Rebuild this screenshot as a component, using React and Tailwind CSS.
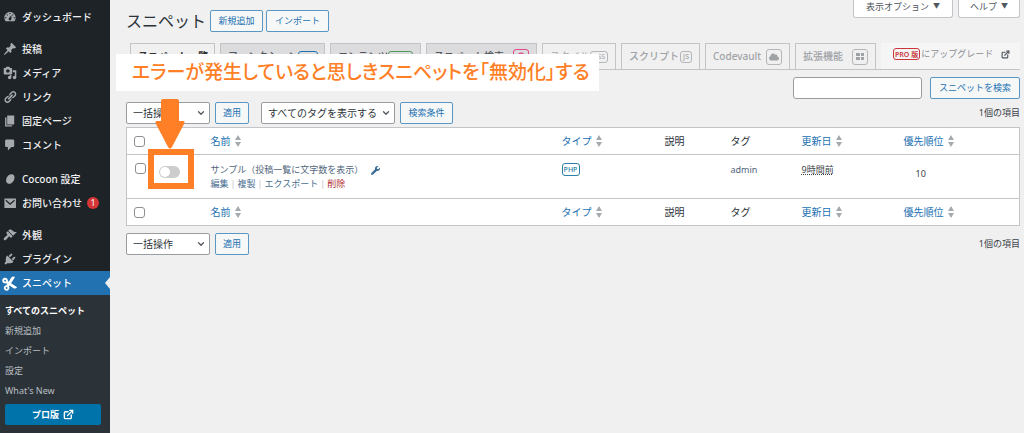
import React, { useState } from 'react';
import { ChevronDown, ExternalLink, Search } from 'lucide-react';
import { FaCut, FaWrench, FaCloud } from 'react-icons/fa';

const ICONS = {
  dashboard: 'M3.76 16h12.48c1.1-1.37 1.76-3.11 1.76-5 0-4.42-3.58-8-8-8s-8 3.58-8 8c0 1.89.66 3.63 1.76 5zM10 4c.55 0 1 .45 1 1s-.45 1-1 1-1-.45-1-1 .45-1 1-1zM6 6c.55 0 1 .45 1 1s-.45 1-1 1-1-.45-1-1 .45-1 1-1zm8 0c.55 0 1 .45 1 1s-.45 1-1 1-1-.45-1-1 .45-1 1-1zm-5.37 5.55L12 7v6c0 1.1-.9 2-2 2s-2-.9-2-2c0-.57.24-1.08.63-1.45zM4 10c.55 0 1 .45 1 1s-.45 1-1 1-1-.45-1-1 .45-1 1-1zm12 0c.55 0 1 .45 1 1s-.45 1-1 1-1-.45-1-1 .45-1 1-1z',
  post: 'M10.44 3.02l1.82-1.82 6.36 6.35-1.83 1.82c-1.05-.68-2.48-.57-3.41.36l-.75.75c-.92.93-1.04 2.35-.35 3.41l-1.83 1.82-2.41-2.41-2.8 2.79c-.42.42-3.38 2.71-3.8 2.29s1.86-3.39 2.28-3.81l2.79-2.79L4.1 9.36l1.83-1.82c1.05.69 2.48.57 3.4-.36l.75-.75c.93-.92 1.05-2.35.36-3.41z',
  media: 'M13 11V4c0-.55-.45-1-1-1h-1.67L9 1H5L3.67 3H2c-.55 0-1 .45-1 1v7c0 .55.45 1 1 1h10c.55 0 1-.45 1-1zM7 4.5c1.38 0 2.5 1.12 2.5 2.5S8.38 9.5 7 9.5 4.5 8.38 4.5 7 5.62 4.5 7 4.5zM14 6h5v10.5c0 1.38-1.12 2.5-2.5 2.5S14 17.88 14 16.5s1.12-2.5 2.5-2.5c.17 0 .34.02.5.05V9h-3V6zm-4 8.05V13h2v3.5c0 1.38-1.12 2.5-2.5 2.5S7 17.88 7 16.5 8.12 14 9.5 14c.17 0 .34.02.5.05z',
  link: 'M17.74 2.76c1.68 1.69 1.68 4.41 0 6.1l-1.53 1.52c-1.12 1.12-2.7 1.47-4.14 1.09l2.62-2.61.76-.77.76-.76c.84-.84.84-2.2 0-3.04-.84-.85-2.2-.85-3.04 0l-.77.76-3.38 3.38c-.37-1.44-.02-3.02 1.1-4.14l1.52-1.53c1.69-1.68 4.42-1.68 6.1 0zM8.59 13.43l5.34-5.34c.42-.42.42-1.1 0-1.52-.44-.43-1.13-.39-1.53 0l-5.33 5.34c-.42.42-.42 1.1 0 1.52.44.43 1.13.39 1.52 0zm-.76 2.29l4.14-4.15c.38 1.44.03 3.02-1.09 4.14l-1.52 1.53c-1.69 1.68-4.41 1.68-6.1 0-1.68-1.68-1.68-4.42 0-6.1l1.53-1.52c1.12-1.12 2.7-1.47 4.14-1.1l-4.14 4.15c-.85.84-.85 2.2 0 3.05.84.84 2.2.84 3.04 0z',
  page: 'M6 15V2h10v13H6zm-1 1h8v2H3V5h2v11z',
  comment: 'M5 2h9c1.1 0 2 .9 2 2v7c0 1.1-.9 2-2 2h-2l-5 5v-5H5c-1.1 0-2-.9-2-2V4c0-1.1.9-2 2-2z',
  cocoon: 'M14 3.500c3 1.600 3.200 5.400 1.200 9-2 3.500-5.600 5.400-8.400 4-2.900-1.600-3.200-5.400-1.200-9 2-3.500 5.600-5.400 8.400-4z',
  mail: 'M2 3.500h16.500v13.500H2zM4.500 5.500l-1 1.200 6.700 6.300 6.800-6.300-1-1.200-5.800 4.700z',
  appearance: 'M14.48 11.06L7.41 3.99l1.5-1.5c.5-.56 2.3-.47 3.51.32 1.21.8 1.43 1.28 2.91 2.1 1.18.64 2.45 1.26 4.45.85zm-.71.71L6.7 4.7 4.93 6.47c-.39.39-.39 1.02 0 1.41l1.06 1.06c.39.39.39 1.03 0 1.42-.6.6-1.43 1.11-2.21 1.69-.35.26-.7.53-1.01.84C1.43 14.23.4 16.08 1.4 17.07c.99 1 2.84-.03 4.18-1.36.31-.31.58-.66.85-1.02.57-.78 1.08-1.61 1.69-2.21.39-.39 1.02-.39 1.41 0l1.06 1.06c.39.39 1.02.39 1.41 0z',
  plugin: 'M13.11 4.36L9.87 7.6 8 5.73l3.24-3.24c.35-.34 1.05-.2 1.56.32.52.51.66 1.21.31 1.55zm-8 1.77l.91-1.12 9.01 9.01-1.19.84c-.71.71-2.63 1.16-3.82 1.16H6.14L4.9 17.26c-.59.59-1.54.59-2.12 0-.59-.58-.59-1.53 0-2.12l1.24-1.24v-3.88c0-1.13.4-3.19 1.09-3.89zm7.26 3.97l3.24-3.24c.34-.35 1.04-.21 1.55.31.52.51.66 1.21.31 1.55l-3.24 3.25z',
};

const menu = [
  { icon: 'dashboard', label: 'ダッシュボード' },
  { icon: 'post', label: '投稿', gap: 'mt-2' },
  { icon: 'media', label: 'メディア' },
  { icon: 'link', label: 'リンク' },
  { icon: 'page', label: '固定ページ' },
  { icon: 'comment', label: 'コメント' },
  { icon: 'cocoon', label: 'Cocoon 設定', gap: 'mt-2.5' },
  { icon: 'mail', label: 'お問い合わせ', count: 1 },
  { icon: 'appearance', label: '外観', gap: 'mt-2' },
  { icon: 'plugin', label: 'プラグイン' },
];

const submenu = ['新規追加', 'インポート', '設定', "What's New"];

const TabBadge = ({ className, children }) => (
  <span className={`flex h-3 items-center rounded-[3px] border px-0.5 text-[7px] leading-none ${className}`}>
    {children}
  </span>
);

const tabs = [
  { label: 'スニペット一覧', width: 'w-[85px]', look: 'bg-[#f0f0f1] text-[#333] font-semibold' },
  { label: 'ファンクション', width: 'w-[105px]', look: 'bg-[#dcdcde] text-[#50575e] font-medium', badge: <TabBadge className="border-[#2271b1] text-[#2271b1]">PHP</TabBadge> },
  { label: 'コンテンツ', width: 'w-[91px]', look: 'bg-[#dcdcde] text-[#50575e] font-medium', badge: <TabBadge className="border-[#4f9a5b] text-[#4f9a5b]">HTML</TabBadge> },
  {
    label: 'スニペット検索',
    width: 'w-[111px]',
    look: 'bg-[#dcdcde] text-[#50575e] font-medium',
    badge: (
      <span className="flex size-4 items-center justify-center rounded-[3px] border border-[#e0478c] text-[#e0478c]">
        <Search size={9} strokeWidth={3} />
      </span>
    ),
  },
  { label: 'スタイル', width: 'w-[74px]', look: 'text-[#a7aaad]', badge: <TabBadge className="border-[#b4b6b8]">CSS</TabBadge> },
  { label: 'スクリプト', width: 'w-[79px]', look: 'text-[#a0a3a6] font-medium', badge: <TabBadge className="border-[#b4b6b8]">JS</TabBadge> },
  {
    label: 'Codevault',
    width: 'w-[85px]',
    look: 'text-[#a0a3a6] font-medium',
    badge: (
      <span className="flex size-4 items-center justify-center rounded-[3px] border border-[#b4b6b8]">
        <FaCloud size={10} />
      </span>
    ),
  },
  {
    label: '拡張機能',
    width: 'w-[81px]',
    look: 'text-[#a0a3a6] font-medium',
    badge: (
      <span className="grid size-4 grid-cols-2 place-content-center gap-px rounded-[3px] border border-[#b4b6b8] px-[3px]">
        <i className="h-[3px] bg-current" />
        <i className="h-[3px] bg-current" />
        <i className="h-[3px] bg-current" />
        <i className="h-[3px] bg-current" />
      </span>
    ),
  },
];

const columns = [
  { label: '名前', sortable: true },
  { label: 'タイプ', sortable: true },
  { label: '説明' },
  { label: 'タグ' },
  { label: '更新日', sortable: true },
  { label: '優先順位', sortable: true },
];

const MenuIcon = ({ name }) => (
  <svg viewBox="0 0 20 20" className="size-3.5 shrink-0 fill-[#a7aaad]" fillRule="evenodd" aria-hidden="true">
    <path d={ICONS[name]} />
  </svg>
);

const Button = ({ className = '', children }) => (
  <button
    type="button"
    className={`h-[22px] shrink-0 whitespace-nowrap rounded-[2px] border border-[#5b97c3] bg-[#f6f7f7] text-[9px] text-[#2271b1] ${className}`}
  >
    {children}
  </button>
);

const Select = ({ label, options, className }) => (
  <span className={`relative flex h-[22px] items-center ${className}`}>
    <select
      aria-label={label}
      className="h-full w-full appearance-none rounded-[2px] border border-[#9a9da0] bg-white pl-1.5 pr-4 text-[10px] text-[#2c3338]"
    >
      {options.map((option) => (
        <option key={option}>{option}</option>
      ))}
    </select>
    <ChevronDown size={10} strokeWidth={3} className="pointer-events-none absolute right-1 text-[#50575e]" />
  </span>
);

const Checkbox = ({ label }) => (
  <input
    type="checkbox"
    aria-label={label}
    className="block size-[11px] appearance-none rounded-[3px] border border-[#8c8f94] bg-white checked:bg-[#2271b1]"
  />
);

const SortArrows = () => (
  <svg viewBox="0 0 6 12" className="h-3 w-1.5 fill-[#a7aaad]" aria-hidden="true">
    <path d="M3 0l3 5H0zM3 12l3-5H0z" />
  </svg>
);

const HeadRow = ({ name }) => (
  <tr className="h-[27px]">
    <td className="pl-[7px]">
      <Checkbox label={`すべて選択 ${name}`} />
    </td>
    <td />
    {columns.map((col) => (
      <th key={col.label} scope="col" className="px-2 text-left text-[10px] font-normal text-[#2c3338]">
        {col.sortable ? (
          <a href="#sort" className="flex items-center gap-1 text-[#2271b1]">
            {col.label}
            <SortArrows />
          </a>
        ) : (
          col.label
        )}
      </th>
    ))}
  </tr>
);

const Sidebar = () => (
  <nav className="flex w-[110px] shrink-0 flex-col bg-[#1d2327] pt-[5px] text-[10px] font-medium text-[#f0f0f1]">
    {menu.map((item) => (
      <a
        key={item.label}
        href="#menu"
        className={`flex h-6 items-center gap-[5px] whitespace-nowrap pl-[3px] ${item.gap || ''}`}
      >
        <MenuIcon name={item.icon} />
        {item.label}
        {item.count && (
          <span className="flex size-3 items-center justify-center rounded-full bg-[#d63638] text-[8px] leading-none">
            {item.count}
          </span>
        )}
      </a>
    ))}
    <a href="#snippets" className="flex h-6 items-center gap-[5px] bg-[#2271b1] pl-0.5 text-white">
      <FaCut size={15} className="-rotate-12" />
      スニペット
      <span className="ml-auto border-y-[6px] border-r-[5px] border-y-transparent border-r-[#f0f0f1]" />
    </a>
    <div className="flex flex-1 flex-col bg-[#2c3338] px-[5px] pb-2 pt-1.5 text-[9px] font-normal text-[#b9bec2]">
      <a href="#all" className="h-5 whitespace-nowrap leading-5 font-bold text-white">
        すべてのスニペット
      </a>
      {submenu.map((label) => (
        <a key={label} href="#sub" className="h-5 leading-5">
          {label}
        </a>
      ))}
      <a
        href="#pro"
        className="mr-1 mt-[3px] flex h-[21px] items-center justify-center gap-1 rounded-[2px] bg-[#0073aa] font-bold text-white"
      >
        プロ版
        <ExternalLink size={11} strokeWidth={3} />
      </a>
    </div>
  </nav>
);

// Explanatory marks drawn on top of the admin screen
const Callout = () => (
  <div className="pointer-events-none">
    <p className="absolute left-[116px] top-[54px] flex h-[37px] w-[483px] items-center whitespace-nowrap bg-white pl-4 text-[19px] font-medium text-[#ff7f27] [font-feature-settings:'palt']">
      エラーが発生していると思しきスニペットを「無効化」する
    </p>
    <svg viewBox="0 0 30 50" className="absolute left-[155px] top-[99px] h-[50px] w-[30px] fill-[#ff7f27]">
      <path d="M8 0h14q2 0 2 2v20h4q2.500 0 1 3L17 48q-2 3-4 0L1 25q-1.500-3 1-3h4V2q0-2 2-2z" />
    </svg>
    <span className="absolute left-[148px] top-[149px] h-10 w-[46px] border-[6px] border-[#ff7f27]" />
  </div>
);

const App = () => {
  const [active, setActive] = useState(false);
  const [search, setSearch] = useState('');

  return (
    <div
      lang="ja"
      className="relative flex min-h-screen bg-[#f0f0f1] font-['Noto_Sans','Noto_Sans_CJK_JP',sans-serif] leading-normal text-[#3c434a]"
    >
      <Sidebar />
      <main className="min-w-0 flex-1 pl-4 pr-1 text-[9px]">
        <header className="flex h-[43px] items-start justify-between">
          <div className="flex items-center gap-1 pt-2.5">
            <h1 className="text-[16px] leading-[22px] text-[#2c3338]">スニペット</h1>
            <Button className="w-[53px]">新規追加</Button>
            <Button className="-ml-px w-[63px]">インポート</Button>
          </div>
          <div className="flex gap-[5px] text-[#50575e]">
            <button
              type="button"
              className="flex h-[18px] w-[100px] items-center justify-center gap-1 rounded-b-[3px] border border-t-0 border-[#c3c4c7] bg-white pb-1"
            >
              表示オプション <span className="text-[7px]">▼</span>
            </button>
            <button
              type="button"
              className="flex h-[18px] w-[62px] items-center justify-center gap-1 rounded-b-[3px] border border-t-0 border-[#c3c4c7] bg-white pb-1"
            >
              ヘルプ <span className="text-[7px]">▼</span>
            </button>
          </div>
        </header>

        <div className="flex h-[27px] gap-[5px] border-b border-[#c3c4c7] pl-1">
          {tabs.map((tab) => (
            <a
              key={tab.label}
              href="#tab"
              className={`flex shrink-0 items-center justify-between whitespace-nowrap border border-b-0 border-[#c3c4c7] px-[7px] text-[10px] ${tab.width} ${tab.look}`}
            >
              {tab.label}
              {tab.badge}
            </a>
          ))}
          <a href="#upgrade" className="flex flex-1 items-center whitespace-nowrap bg-[#f5f5f5] pb-1 pl-3 text-[#8c8f94]">
            <span className="mr-px flex h-3 items-center rounded-[3px] border border-[#c9353a] px-px text-[7px] font-semibold leading-none text-[#c9353a]">
              PRO 版
            </span>
            にアップグレード
            <ExternalLink size={9} strokeWidth={3} className="ml-2 text-[#50575e]" />
          </a>
        </div>

        <div className="mt-[7px] flex h-[22px] items-start justify-between">
          <div className="flex gap-1 pt-1 leading-none">
            <a href="#all" className="font-semibold text-black">すべて (1)</a>
            <span className="text-[#a7aaad]">|</span>
            <a href="#inactive" className="text-[#2271b1]">停止中 (1)</a>
          </div>
          <div className="flex gap-2">
            <input
              type="search"
              aria-label="スニペットを検索"
              value={search}
              onChange={(e) => setSearch(e.target.value)}
              className="h-[22px] w-[129px] rounded-[3px] border border-[#9a9da0] bg-white px-1.5 text-[10px]"
            />
            <Button className="w-[90px]">スニペットを検索</Button>
          </div>
        </div>

        <div className="mt-[3px] flex items-center">
          <Select label="一括操作" options={['一括操作']} className="w-[84px]" />
          <Button className="ml-[5px] w-[34px]">適用</Button>
          <Select label="タグ" options={['すべてのタグを表示する']} className="ml-3 w-[134px]" />
          <Button className="ml-[5px] w-[53px]">検索条件</Button>
          <span className="ml-auto">1個の項目</span>
        </div>

        <table className="mt-[3px] w-full table-fixed border border-[#c3c4c7] bg-white">
          <colgroup>
            <col className="w-7" />
            <col className="w-12" />
            <col />
            <col className="w-[103px]" />
            <col className="w-[66px]" />
            <col className="w-[71px]" />
            <col className="w-[102px]" />
            <col className="w-[124px]" />
          </colgroup>
          <thead className="border-b border-[#c3c4c7]">
            <HeadRow name="上" />
          </thead>
          <tbody>
            <tr className="h-11 align-top">
              <td className="pl-2 pt-2">
                <Checkbox label="サンプル（投稿一覧に文字数を表示）" />
              </td>
              <td className="pl-1 pt-[11px]">
                <input
                  type="checkbox"
                  role="switch"
                  aria-label="有効化"
                  checked={active}
                  onChange={(e) => setActive(e.target.checked)}
                  className="block h-3 w-[21px] appearance-none rounded-full bg-[#ccc] p-px before:block before:size-2.5 before:rounded-full before:bg-white checked:bg-[#2271b1] checked:before:ml-[9px]"
                />
              </td>
              <td className="px-2 pt-2 leading-[14px]">
                <div className="flex items-center gap-2 whitespace-nowrap">
                  <a href="#edit" className="text-[#50657a]">サンプル（投稿一覧に文字数を表示）</a>
                  <FaWrench size={9} className="text-[#3a6a96]" />
                </div>
                <div className="flex gap-0.5 whitespace-nowrap text-[#4a6f91]">
                  <a href="#edit">編集</a>
                  <span className="text-[#c3c4c7]">|</span>
                  <a href="#clone">複製</a>
                  <span className="text-[#c3c4c7]">|</span>
                  <a href="#export">エクスポート</a>
                  <span className="text-[#c3c4c7]">|</span>
                  <a href="#delete" className="text-[#b32d2e]">削除</a>
                </div>
              </td>
              <td className="px-2 pt-2">
                <a
                  href="#php"
                  className="flex h-[13px] w-[18px] items-center justify-center rounded-[3px] border border-[#2b7fa8] text-[7px] font-medium leading-none text-[#2b7fa8]"
                >
                  PHP
                </a>
              </td>
              <td />
              <td className="px-2 pt-2 leading-[14px]">
                <a href="#tag" className="text-[#50657a]">admin</a>
              </td>
              <td className="px-2 pt-2 leading-[14px]">
                <abbr title="9時間前" className="underline decoration-dotted">9時間前</abbr>
              </td>
              <td className="pl-5 pt-3 text-[9px] leading-[14px]">10</td>
            </tr>
          </tbody>
          <tfoot className="border-t border-[#c3c4c7]">
            <HeadRow name="下" />
          </tfoot>
        </table>

        <div className="mt-[7px] flex items-center">
          <Select label="一括操作" options={['一括操作']} className="w-[84px]" />
          <Button className="ml-[5px] w-[34px]">適用</Button>
          <span className="ml-auto">1個の項目</span>
        </div>
      </main>
      <Callout />
    </div>
  );
};

export default App;
